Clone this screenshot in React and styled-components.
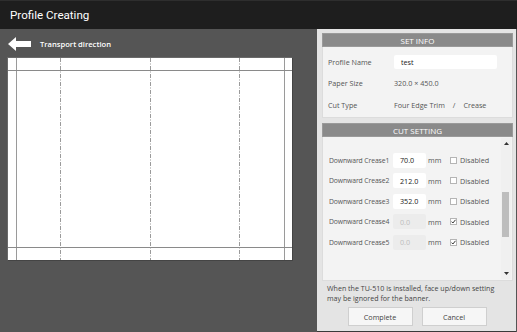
import React from "react";
import styled, { createGlobalStyle } from "styled-components";

const GlobalStyle = createGlobalStyle`
  html, body {
    margin: 0;
    padding: 0;
    background: #555555;
  }
  * {
    box-sizing: border-box;
  }
`;

const Window = styled.div`
  width: 517px;
  height: 332px;
  display: flex;
  flex-direction: column;
  font-family: "Open Sans", "Noto Sans", sans-serif;
  overflow: hidden;
`;

const TitleBar = styled.div`
  height: 29px;
  flex-shrink: 0;
  background: #1e1e1e;
  color: #ffffff;
  font-family: Roboto, "Open Sans", sans-serif;
  font-size: 11.6px;
  display: flex;
  align-items: center;
  padding-left: 10px;
  border-top: 1px solid #2e2e2e;
`;

const Main = styled.div`
  flex: 1;
  display: flex;
  background: #555555;
  min-height: 0;
`;

const LeftPane = styled.div`
  width: 317px;
  flex-shrink: 0;
  display: flex;
  flex-direction: column;
`;

const DirectionRow = styled.div`
  height: 28px;
  display: flex;
  align-items: center;
  gap: 9px;
  padding-left: 8px;
  padding-top: 2px;
  color: #ffffff;
  font-size: 7.6px;
  font-weight: 600;
`;

const Paper = styled.div`
  margin-left: 7px;
  width: 286px;
  height: 204px;
  background: #ffffff;
  border: 1px solid #6a6a6a;
  border-right-color: #444;
  border-bottom-color: #444;
`;

const Panel = styled.div`
  width: 199px;
  flex-shrink: 0;
  background: #e4e4e4;
  padding: 4px 3px 0 5px;
  display: flex;
  flex-direction: column;
  border-bottom: 1px solid #3a3a3a;
`;

const SectionHead = styled.div`
  height: 14px;
  background: #8a8a8a;
  color: #ffffff;
  font-size: 8px;
  display: flex;
  align-items: center;
  justify-content: center;
  border: 1px solid #9a9a9a;
`;

const InfoBody = styled.div`
  background: #f3f3f3;
  border: 1px solid #dcdcdc;
  border-top: none;
  height: 71px;
  padding: 4px 0 0 5px;
  display: flex;
  flex-direction: column;
  margin-bottom: 5px;
`;

const InfoRow = styled.div`
  height: 21.5px;
  display: flex;
  align-items: center;
  font-size: 7.2px;
  color: #555;
  white-space: nowrap;
`;

const InfoLabel = styled.div`
  width: 66px;
  flex-shrink: 0;
`;

const InfoValue = styled.div`
  display: flex;
  gap: 8px;
`;

const TextBox = styled.div`
  width: ${(p) => p.$w || 103}px;
  height: ${(p) => p.$h || 14}px;
  flex-shrink: 0;
  background: ${(p) => (p.$disabled ? "#ececec" : "#ffffff")};
  color: ${(p) => (p.$disabled ? "#bdbdbd" : "#222")};
  border-radius: 2px;
  display: flex;
  align-items: center;
  padding-left: 7px;
  font-size: 7.2px;
`;

const ScrollBox = styled.div`
  height: 144px;
  background: #f3f3f3;
  border: 1px solid #dcdcdc;
  border-top: none;
  display: flex;
`;

const ScrollContent = styled.div`
  flex: 1;
  padding: 13px 0 0 6px;
  display: flex;
  flex-direction: column;
`;

const CreaseRow = styled.div`
  height: 20.5px;
  display: flex;
  align-items: center;
  font-size: 7.2px;
  color: #555;
  white-space: nowrap;
`;

const CreaseLabel = styled.div`
  width: 64px;
  flex-shrink: 0;
  font-size: 6.8px;
  letter-spacing: -0.1px;
  overflow: hidden;
`;

const Unit = styled.div`
  margin-left: 2px;
  width: 22px;
  flex-shrink: 0;
`;

const CheckBox = styled.div`
  width: 7px;
  height: 7px;
  flex-shrink: 0;
  border: 1px solid #b5b5b5;
  background: #ffffff;
  display: flex;
  align-items: center;
  justify-content: center;
  margin-right: 3px;
`;

const ScrollTrack = styled.div`
  width: 10px;
  flex-shrink: 0;
  margin: 1px 1px 1px 0;
  background: #f0f0f0;
  display: flex;
  flex-direction: column;
  align-items: center;
  justify-content: space-between;
  padding: 4px 0;
  position: relative;
`;

const Thumb = styled.div`
  position: absolute;
  top: 54px;
  left: 1px;
  width: 7px;
  height: 45px;
  background: #bdbdbd;
`;

const Note = styled.div`
  font-size: 7.1px;
  line-height: 9.5px;
  color: #444;
  padding: 3px 0 0 5px;
  white-space: nowrap;
`;

const ButtonRow = styled.div`
  display: flex;
  justify-content: center;
  gap: 9px;
  margin-top: 4px;
  margin-right: 1px;
`;

const Button = styled.div`
  width: 65px;
  height: 19px;
  background: #f6f6f6;
  border: 1px solid #cfcfcf;
  display: flex;
  align-items: center;
  justify-content: center;
  font-size: 7.2px;
  color: #444;
`;

const creases = [
  { name: "Downward Crease1", value: "70.0", disabled: false },
  { name: "Downward Crease2", value: "212.0", disabled: false },
  { name: "Downward Crease3", value: "352.0", disabled: false },
  { name: "Downward Crease4", value: "0.0", disabled: true },
  { name: "Downward Crease5", value: "0.0", disabled: true },
];

const PaperDrawing = () => (
  <svg width="284" height="202" viewBox="0 0 284 202">
    <g stroke="#9a9a9a" strokeWidth="1">
      <line x1="8.5" y1="0" x2="8.5" y2="202" />
      <line x1="276.5" y1="0" x2="276.5" y2="202" />
    </g>
    <g stroke="#8a8a8a" strokeWidth="1">
      <line x1="0" y1="12.5" x2="284" y2="12.5" />
      <line x1="0" y1="189.5" x2="284" y2="189.5" />
    </g>
    <g stroke="#9a9a9a" strokeWidth="1" strokeDasharray="4 1.5 1 1.5">
      <line x1="52.5" y1="0" x2="52.5" y2="202" />
      <line x1="142.5" y1="0" x2="142.5" y2="202" />
      <line x1="231.5" y1="0" x2="231.5" y2="202" />
    </g>
  </svg>
);

const ArrowIcon = () => (
  <svg width="23" height="14" viewBox="0 0 23 14">
    <polygon points="0,7 8,0 8,4 23,4 23,10 8,10 8,14" fill="#ffffff" />
  </svg>
);

const Check = () => (
  <svg width="5" height="5" viewBox="0 0 5 5">
    <polyline points="0.5,2.6 1.9,4 4.5,0.8" fill="none" stroke="#333" strokeWidth="1" />
  </svg>
);

const Triangle = ({ up }) => (
  <svg width="5" height="3" viewBox="0 0 5 3">
    <polygon points={up ? "0,3 2.5,0 5,3" : "0,0 5,0 2.5,3"} fill="#333" />
  </svg>
);

const App = () => {
  return (
    <Window>
      <GlobalStyle />
      <TitleBar>Profile Creating</TitleBar>
      <Main>
        <LeftPane>
          <DirectionRow>
            <ArrowIcon />
            <span>Transport direction</span>
          </DirectionRow>
          <Paper>
            <PaperDrawing />
          </Paper>
        </LeftPane>
        <Panel>
          <SectionHead>SET INFO</SectionHead>
          <InfoBody>
            <InfoRow>
              <InfoLabel>Profile Name</InfoLabel>
              <TextBox>test</TextBox>
            </InfoRow>
            <InfoRow>
              <InfoLabel>Paper Size</InfoLabel>
              <InfoValue>320.0 × 450.0</InfoValue>
            </InfoRow>
            <InfoRow>
              <InfoLabel>Cut Type</InfoLabel>
              <InfoValue>
                <span>Four Edge Trim</span>
                <span>/</span>
                <span>Crease</span>
              </InfoValue>
            </InfoRow>
          </InfoBody>
          <SectionHead>CUT SETTING</SectionHead>
          <ScrollBox>
            <ScrollContent>
              {creases.map((c) => (
                <CreaseRow key={c.name}>
                  <CreaseLabel>{c.name}</CreaseLabel>
                  <TextBox $w={33} $h={15} $disabled={c.disabled}>
                    {c.value}
                  </TextBox>
                  <Unit>mm</Unit>
                  <CheckBox>{c.disabled && <Check />}</CheckBox>
                  <span>Disabled</span>
                </CreaseRow>
              ))}
            </ScrollContent>
            <ScrollTrack>
              <Triangle up />
              <Thumb />
              <Triangle />
            </ScrollTrack>
          </ScrollBox>
          <Note>
            When the TU-510 is installed, face up/down setting
            <br />
            may be ignored for the banner.
          </Note>
          <ButtonRow>
            <Button>Complete</Button>
            <Button>Cancel</Button>
          </ButtonRow>
        </Panel>
      </Main>
    </Window>
  );
};

export default App;
